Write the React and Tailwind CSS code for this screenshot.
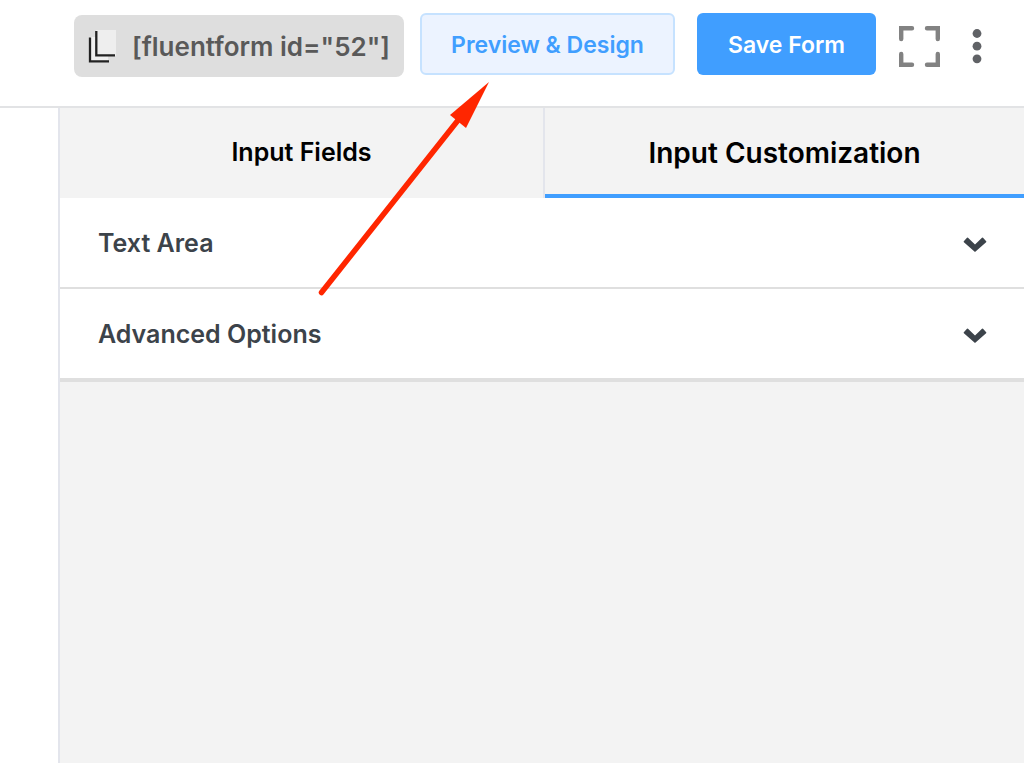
import clsx from 'clsx';

const tabs = [
  { label: 'Input Fields', active: false },
  { label: 'Input Customization', active: true },
];

const sections = ['Text Area', 'Advanced Options'];

function CopyIcon() {
  return (
    <svg viewBox="0 0 28 34" className="h-[34px] w-7 flex-shrink-0" fill="none" aria-hidden="true">
      <path d="M2 8H8V26H20V32H2Z" fill="#f0f0f0" />
      <path d="M8 1H28V27H8Z" fill="#eeeeee" />
      <path d="M2 8.500V32.300H21" stroke="#222222" strokeWidth="2.300" />
      <path d="M8.300 2V26.300H27" stroke="#222222" strokeWidth="2.300" />
    </svg>
  );
}

function FullscreenIcon() {
  return (
    <svg viewBox="0 0 41 41" className="h-[41px] w-[41px]" fill="none" stroke="#828282" strokeWidth="4.400" strokeLinecap="round" aria-hidden="true">
      <path d="M2.200 13V2.200H13M28 2.200H38.800V13M38.800 28V38.800H28M13 38.800H2.200V28" />
    </svg>
  );
}

function DotsIcon() {
  return (
    <svg viewBox="0 0 10 36" className="h-9 w-2.5" fill="#606266" aria-hidden="true">
      <circle cx="5" cy="4.500" r="4.400" />
      <circle cx="5" cy="17.200" r="4.400" />
      <circle cx="5" cy="29.800" r="4.400" />
    </svg>
  );
}

function ChevronIcon() {
  return (
    <svg viewBox="0 0 24 16" className="h-4 w-6" aria-hidden="true">
      <path d="M0.800 5.200L4 1.700Q4.500 1.200 5 1.700L12 8.400L19 1.700Q19.500 1.200 20 1.700L23.200 5.200Q23.600 5.700 23.100 6.200L12 16L0.900 6.200Q0.400 5.700 0.800 5.200Z" fill="#3c434a" />
    </svg>
  );
}

function PointerArrow() {
  return (
    <svg viewBox="0 0 172 216" className="pointer-events-none absolute top-[81px] left-[318px] h-[216px] w-[172px]" aria-hidden="true">
      <path d="M3.500 211.500L141 38" stroke="#ff2600" strokeWidth="5.500" strokeLinecap="round" />
      <path d="M171 1L148 47L132 34Z" fill="#ff2600" />
    </svg>
  );
}

export default function App() {
  return (
    <div className="relative flex min-h-screen flex-col overflow-x-hidden bg-white font-['Inter','Liberation_Sans',sans-serif] font-semibold">
      <header className="flex h-[108px] items-start justify-end border-b-2 border-[#e2e3e5] pt-[13px] pr-[42px]">
        <button type="button" className="mt-0.5 mr-4 flex h-[62px] w-[330px] items-center gap-4 rounded-lg bg-[#dedede] pl-3.5 text-[26px] whitespace-nowrap text-[#595959]">
          <CopyIcon />
          <span>[fluentform id="52"]</span>
        </button>
        <button type="button" className="mr-[22px] h-[62px] w-[255px] rounded-md border-2 border-[#c6e2ff] bg-[#ecf3ff] pt-0.5 text-[23px] whitespace-nowrap text-[#409eff]">
          Preview &amp; Design
        </button>
        <button type="button" className="mr-[23px] h-[62px] w-[179px] rounded-md bg-[#409eff] pt-0.5 text-[23px] whitespace-nowrap text-white">
          Save Form
        </button>
        <button type="button" aria-label="Fullscreen" className="mt-[13px] mr-8">
          <FullscreenIcon />
        </button>
        <button type="button" aria-label="More options" className="mt-4">
          <DotsIcon />
        </button>
      </header>

      <main className="ml-[58px] flex-1 border-l-2 border-[#e3e5ec] bg-[#f3f3f3]">
        <div role="tablist" className="grid h-[90px] grid-cols-[485fr_479fr] text-black">
          {tabs.map(({ label, active }) => (
            <button
              key={label}
              type="button"
              role="tab"
              aria-selected={active}
              className={clsx('whitespace-nowrap', active ? 'border-b-4 border-[#409eff] pt-1 text-[28px]' : 'border-r-2 border-[#e3e5ec] text-[25px]')}
            >
              {label}
            </button>
          ))}
        </div>

        <div className="divide-y-2 divide-[#dfdfdf] border-b-4 border-[#dfdfdf] bg-white">
          {sections.map((title) => (
            <div key={title}>
              <button type="button" className="flex h-[89px] w-full items-center justify-between pt-0.5 pr-[37px] pl-[38px] text-left text-[25px] text-[#3c434a]">
                <span>{title}</span>
                <ChevronIcon />
              </button>
            </div>
          ))}
        </div>
      </main>

      <PointerArrow />
    </div>
  );
}
